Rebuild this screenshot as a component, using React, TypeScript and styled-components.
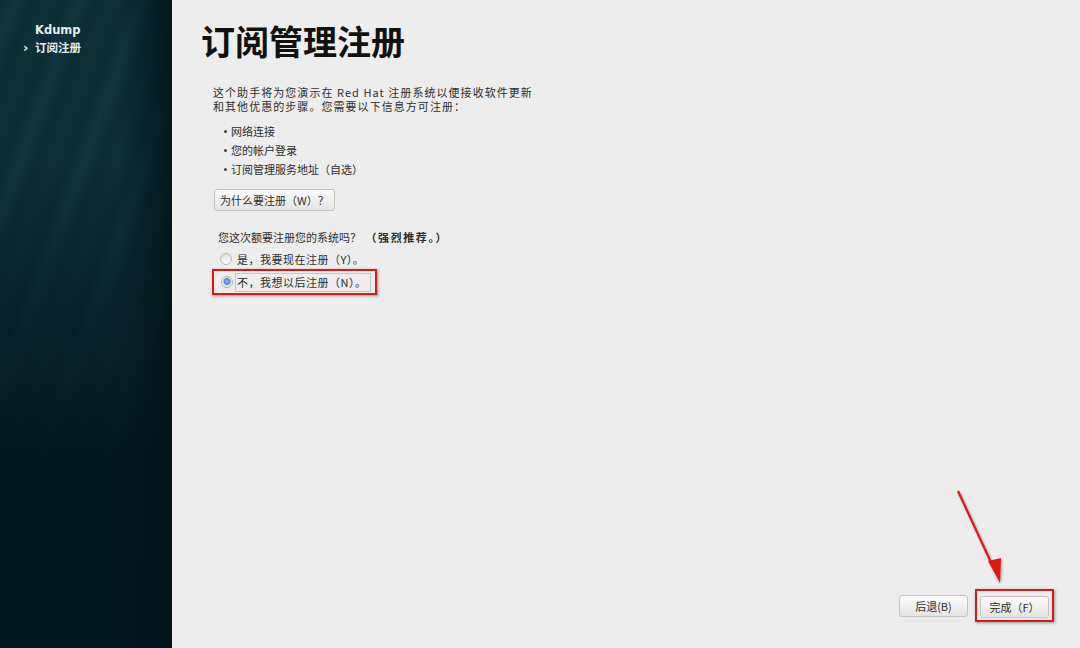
import React from 'react'
import styled, { createGlobalStyle } from 'styled-components'

const GlobalStyle = createGlobalStyle`
  html, body {
    margin: 0;
    padding: 0;
    width: 1080px;
    height: 648px;
    overflow: hidden;
    background: #ededed;
  }
  * { box-sizing: border-box; }
`

const cjk = `"Noto Sans CJK SC", "DejaVu Sans", sans-serif`

export default function App() {
    return (
        <Root>
            <GlobalStyle />
            <Sidebar>
                <NavItem>Kdump</NavItem>
                <NavItem active>订阅注册</NavItem>
            </Sidebar>
            <Main>
                <Title>订阅管理注册</Title>
                <Content>
                    <Intro>
                        这个助手将为您演示在 Red Hat 注册系统以便接收软件更新<br />
                        和其他优惠的步骤。您需要以下信息方可注册：
                    </Intro>
                    <BulletList>
                        <li>网络连接</li>
                        <li>您的帐户登录</li>
                        <li>订阅管理服务地址（自选）</li>
                    </BulletList>
                    <GtkButton>为什么要注册（W）？</GtkButton>
                    <Question>
                        您这次额要注册您的系统吗？ <b>（强烈推荐。）</b>
                    </Question>
                    <RadioRow>
                        <Radio />
                        <span>是，我要现在注册（Y）。</span>
                    </RadioRow>
                    <Highlight>
                        <RadioRow>
                            <Radio checked />
                            <FocusLabel>不，我想以后注册（N）。</FocusLabel>
                        </RadioRow>
                    </Highlight>
                </Content>
                <Footer>
                    <GtkButton wide>后退(B)</GtkButton>
                    <Highlight pad>
                        <GtkButton wide>完成（F）</GtkButton>
                    </Highlight>
                </Footer>
                <Arrow width="60" height="100" viewBox="0 0 60 100">
                    <defs>
                        <filter id="sh" x="-50%" y="-50%" width="200%" height="200%">
                            <feDropShadow dx="1" dy="1" stdDeviation="1" floodColor="#000" floodOpacity="0.35" />
                        </filter>
                    </defs>
                    <g filter="url(#sh)">
                        <line x1="6" y1="2" x2="43" y2="82" stroke="#e31414" strokeWidth="2.2" />
                        <polygon points="48,94 36,72 49,69" fill="#e31414" />
                    </g>
                </Arrow>
            </Main>
        </Root>
    )
}

const Root = styled.div`
    display: flex;
    width: 1080px;
    height: 648px;
    font-family: ${cjk};
    color: #2e2e2e;
`

const Sidebar = styled.nav`
    width: 172px;
    flex-shrink: 0;
    padding: 23px 0 0 35px;
    display: flex;
    flex-direction: column;
    gap: 3px;
    background:
        linear-gradient(90deg, rgba(1, 20, 24, 0) 70%, rgba(1, 20, 24, 0.85) 100%),
        linear-gradient(180deg, rgba(1, 22, 26, 0) 0%, rgba(1, 22, 26, 0) 25%, rgba(1, 22, 26, 0.92) 70%, #01171b 100%),
        repeating-linear-gradient(110deg, rgba(40, 90, 100, 0) 0px, rgba(40, 90, 100, 0.18) 14px, rgba(40, 90, 100, 0) 30px, rgba(40, 90, 100, 0.08) 44px, rgba(40, 90, 100, 0) 60px),
        #0b2c32;
`

const NavItem = styled.div<{ active?: boolean }>`
    position: relative;
    font-family: "DejaVu Sans", "Noto Sans CJK SC", sans-serif;
    font-size: 11.5px;
    font-weight: bold;
    color: #e8eef0;
    line-height: 15px;
    &::before {
        content: ${p => (p.active ? "'›'" : "''")};
        position: absolute;
        left: -12px;
        top: -1px;
        font-size: 13px;
    }
`

const Main = styled.main`
    position: relative;
    flex: 1;
    display: flex;
    flex-direction: column;
    padding: 19px 26px 26px 29px;
`

const Title = styled.h1`
    margin: 0;
    font-size: 34px;
    font-weight: bold;
    line-height: 44px;
    color: #111;
    font-family: "Noto Sans CJK SC", sans-serif;
`

const Content = styled.div`
    margin-top: 22px;
    padding-left: 12px;
    display: flex;
    flex-direction: column;
    align-items: flex-start;
    font-size: 11px;
`

const Intro = styled.p`
    margin: 0;
    line-height: 14px;
    letter-spacing: 1.05px;
`

const BulletList = styled.ul`
    margin: 9px 0 10px;
    padding: 0 0 0 11px;
    list-style: none;
    li {
        line-height: 19px;
        position: relative;
        padding-left: 7px;
    }
    li::before {
        content: '';
        position: absolute;
        left: 0;
        top: 8px;
        width: 3px;
        height: 3px;
        border-radius: 50%;
        background: #444;
    }
`

const GtkButton = styled.button<{ wide?: boolean }>`
    font-family: ${cjk};
    font-size: 11px;
    color: #2e2e2e;
    height: 22px;
    padding: 0 ${p => (p.wide ? '0' : '5px')};
    width: ${p => (p.wide ? '69px' : 'auto')};
    margin-left: ${p => (p.wide ? '0' : '1px')};
    border: 1px solid #c4c4c4;
    border-radius: 3px;
    background: linear-gradient(#fbfbfb, #e4e4e4);
    box-shadow: inset 0 1px 0 #fff;
`

const Question = styled.div`
    margin-top: 18px;
    margin-left: 5px;
    line-height: 16px;
    b {
        font-weight: bold;
        letter-spacing: 1.6px;
        margin-left: 2px;
    }
`

const RadioRow = styled.label`
    display: flex;
    align-items: center;
    gap: 5px;
    height: 20px;
    margin-left: 7px;
    margin-top: 4px;
    letter-spacing: 0.5px;
`

const Radio = styled.span<{ checked?: boolean }>`
    width: 12px;
    height: 12px;
    border-radius: 50%;
    border: 1px solid #b5b5b5;
    background: ${p =>
        p.checked
            ? 'radial-gradient(circle at 50% 45%, #8fc0f0 0, #4a8ad6 3px, #dfe6ee 4px, #f4f4f4 6px)'
            : 'linear-gradient(#e0e0e0, #fbfbfb)'};
`

const FocusLabel = styled.span`
    border: 1px solid #c8c8c8;
    padding: 1px 4px 1px 1px;
    margin-left: -3px;
    line-height: 15px;
`

const Highlight = styled.div<{ pad?: boolean }>`
    border: 2px solid #e31414;
    padding: ${p => (p.pad ? '2px 3px' : '0 4px 1px 0')};
    margin-left: ${p => (p.pad ? '0' : '-1px')};
    margin-top: 0;
    box-shadow: 1px 1px 3px rgba(0, 0, 0, 0.35);
    > label {
        margin-top: 1px;
    }
`

const Footer = styled.div`
    margin-top: auto;
    display: flex;
    align-items: center;
    justify-content: flex-end;
    gap: 7px;
`

const Arrow = styled.svg`
    position: absolute;
    left: 780px;
    top: 489px;
`
